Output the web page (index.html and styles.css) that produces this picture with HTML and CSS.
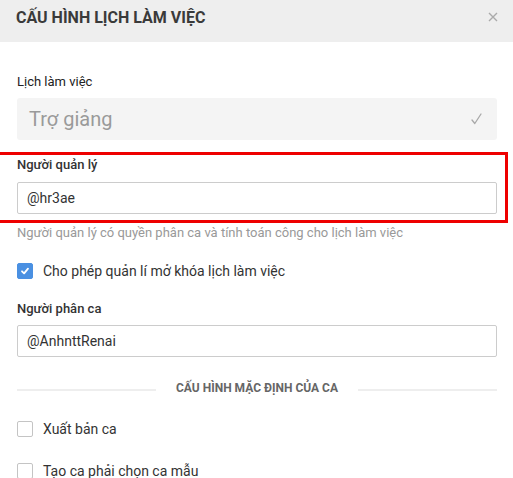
FILE: index.html
```html
<!DOCTYPE html>
<html lang="vi">
<head>
<meta charset="utf-8">
<title>Cấu hình lịch làm việc</title>
<link rel="stylesheet" href="styles.css">
</head>
<body>
<div class="modal">
  <div class="modal-header">
    <div class="modal-title">CẤU HÌNH LỊCH LÀM VIỆC</div>
    <svg class="close" width="10" height="10" viewBox="0 0 10 10"><path d="M1 1L9 9M9 1L1 9" stroke="#aaa" stroke-width="1.4" fill="none"/></svg>
  </div>
  <div class="modal-body">
    <div class="group g-schedule">
      <div class="label label-light">Lịch làm việc</div>
      <div class="select">
        <span class="select-text">Trợ giảng</span>
        <svg class="select-check" width="11" height="12" viewBox="0 0 11 12"><path d="M1 7L3.8 10.5L10 1" stroke="#a8a8a8" stroke-width="1.3" fill="none" stroke-linecap="round" stroke-linejoin="round"/></svg>
      </div>
    </div>
    <div class="group g-manager">
      <div class="label">Người quản lý</div>
      <div class="input">@hr3ae</div>
    </div>
    <div class="help">Người quản lý có quyền phân ca và tính toán công cho lịch làm việc</div>
    <div class="check-row r-allow">
      <span class="box checked"><svg width="16" height="16" viewBox="0 0 16 16"><path d="M5 8.3L7.1 10.4L11 5.6" stroke="#fff" stroke-width="1.8" fill="none" stroke-linecap="round" stroke-linejoin="round"/></svg></span>
      <span class="check-text">Cho phép quản lí mở khóa lịch làm việc</span>
    </div>
    <div class="group g-assign">
      <div class="label">Người phân ca</div>
      <div class="input">@AnhnttRenai</div>
    </div>
    <div class="divider">
      <span class="line"></span>
      <span class="divider-text">CẤU HÌNH MẶC ĐỊNH CỦA CA</span>
      <span class="line"></span>
    </div>
    <div class="check-row r-publish">
      <span class="box"></span>
      <span class="check-text">Xuất bản ca</span>
    </div>
    <div class="check-row r-template">
      <span class="box"></span>
      <span class="check-text">Tạo ca phải chọn ca mẫu</span>
    </div>
  </div>
  <div class="highlight"></div>
</div>
</body>
</html>
```
FILE: styles.css
```css
html, body {
  margin: 0;
  padding: 0;
  background: #fff;
  overflow: hidden;
}
body {
  font-family: Roboto, "Liberation Sans", sans-serif;
  color: #333;
}
.modal {
  position: relative;
  width: 513px;
  height: 478px;
  overflow: hidden;
}
.modal-header {
  height: 42px;
  box-sizing: border-box;
  background: #eeeeee;
  display: flex;
  justify-content: space-between;
  align-items: flex-start;
  padding: 8px 15px 0 16px;
}
.modal-title {
  font-size: 16px;
  line-height: 20px;
  font-weight: 700;
  color: #3a3a3a;
}
.close {
  margin-top: 4px;
  display: block;
}
.modal-body {
  padding: 0 16px 0 17px;
}
.label {
  font-size: 13px;
  line-height: 16px;
  font-weight: 500;
  color: #333;
  margin-bottom: 8px;
}
.label-light {
  font-weight: 400;
  color: #222;
}
.g-schedule { margin-top: 32px; }
.g-manager { margin-top: 17px; }
.g-manager .label { margin-bottom: 9px; }
.g-assign { margin-top: 20px; }
.select {
  height: 42px;
  background: #f4f4f4;
  border-radius: 3px;
  display: flex;
  align-items: center;
  justify-content: space-between;
  padding: 0 15px 0 12px;
}
.select-text {
  font-size: 20px;
  line-height: 42px;
  color: #9a9a9a;
}
.select-check {
  display: block;
  margin-top: -1px;
}
.input {
  height: 32px;
  box-sizing: border-box;
  border: 1px solid #cccccc;
  border-radius: 2px;
  padding: 0 9px;
  font-size: 14px;
  line-height: 30px;
  color: #333;
}
.help {
  margin-top: 11px;
  font-size: 13px;
  line-height: 16px;
  color: #999;
}
.check-row {
  display: flex;
  align-items: center;
  height: 20px;
  gap: 10px;
}
.r-allow { margin-top: 20px; }
.r-publish { margin-top: 23px; }
.r-template { margin-top: 22px; }
.box {
  width: 16px;
  height: 16px;
  box-sizing: border-box;
  border: 1px solid #c4c4c4;
  border-radius: 2px;
  background: #fff;
  display: block;
  flex: none;
}
.box.checked {
  background: #4a90e2;
  border-color: #4a90e2;
}
.box svg {
  display: block;
  margin: -1px;
}
.check-text {
  font-size: 14px;
  line-height: 20px;
  color: #333;
}
.divider {
  margin-top: 23px;
  height: 16px;
  display: flex;
  align-items: center;
  gap: 20px;
}
.line {
  flex: 1;
  height: 2px;
  background: #eeeeee;
  margin-top: 3px;
}
.divider-text {
  font-size: 12px;
  line-height: 16px;
  font-weight: 700;
  color: #666;
}
.highlight {
  position: absolute;
  left: -3px;
  top: 152px;
  width: 511px;
  height: 71px;
  box-sizing: border-box;
  border: 3px solid #ee0000;
  pointer-events: none;
}
```
